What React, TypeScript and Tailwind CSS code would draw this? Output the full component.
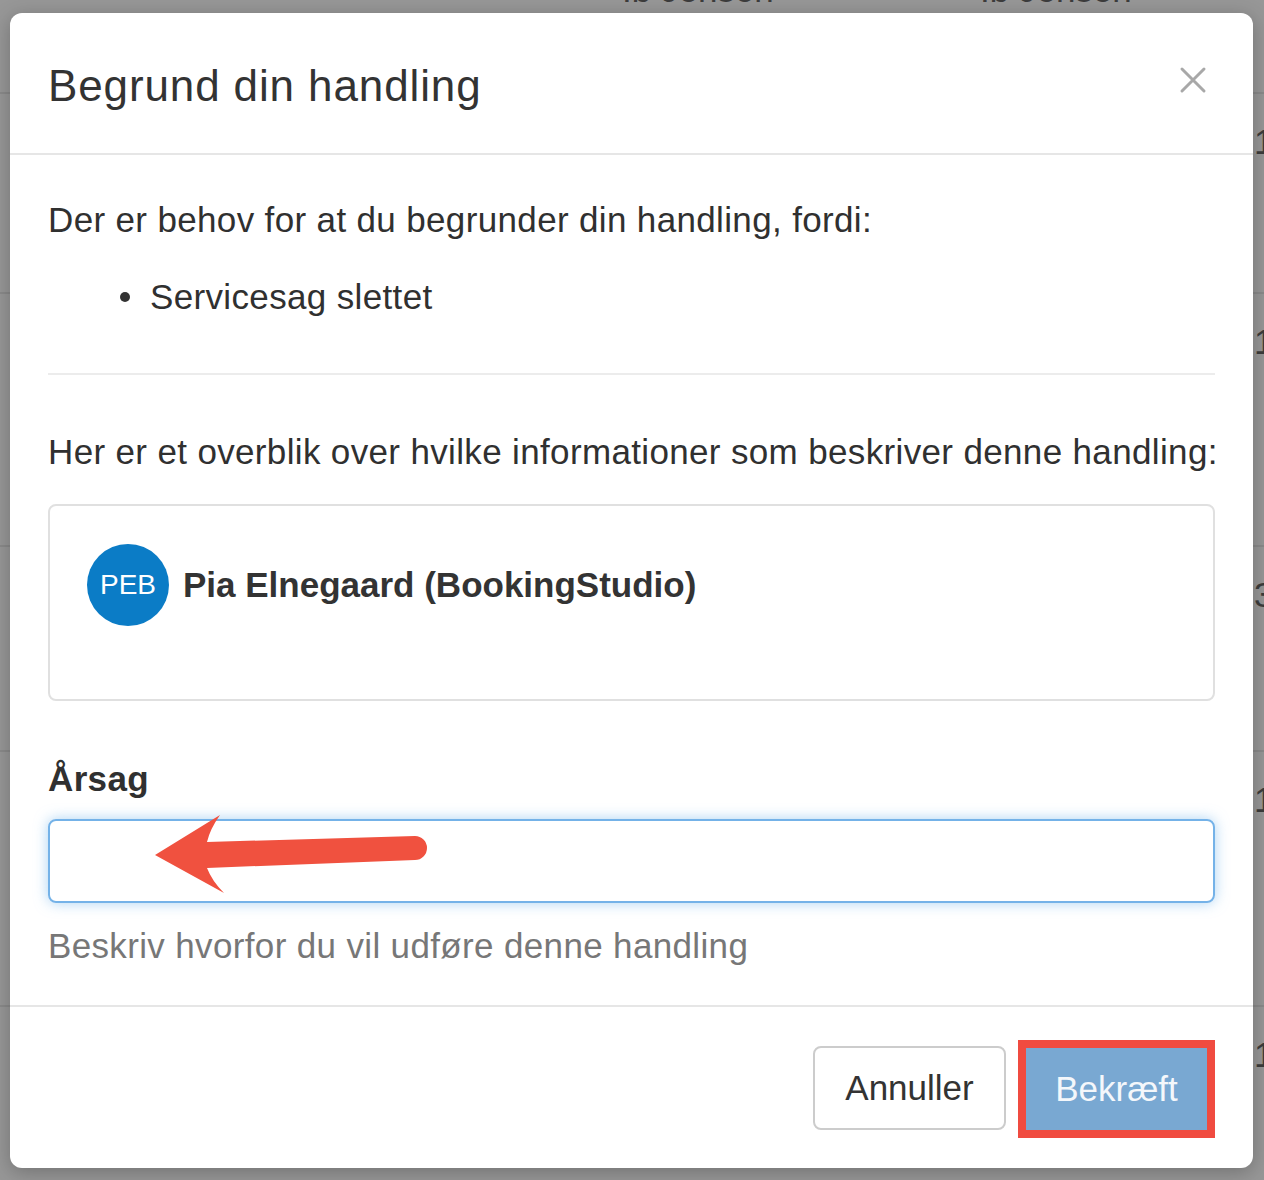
import React from "react";

const rows = [
  { top: 92, digit: "1" },
  { top: 292, digit: "1" },
  { top: 545, digit: "3" },
  { top: 750, digit: "1" },
  { top: 1005, digit: "1" },
];

function Backdrop() {
  return (
    <div className="absolute inset-0 bg-[#979797] text-[35px] text-[#3c3c3c]">
      <div className="absolute left-[622px] top-[-30px] leading-[40px]">Ib Jensen</div>
      <div className="absolute left-[980px] top-[-30px] leading-[40px]">Ib Jensen</div>
      {rows.map((r) => (
        <div key={r.top} className="absolute left-0 right-0 border-t-2 border-[#8a8a8a]" style={{ top: r.top }}>
          <span className="absolute left-[1254px] top-[28px] leading-[40px]">{r.digit}</span>
        </div>
      ))}
    </div>
  );
}

function Arrow() {
  // red annotation arrow drawn over the input
  return (
    <svg
      className="absolute left-0 top-0 overflow-visible"
      width={400}
      height={80}
      viewBox="0 0 400 80"
    >
      <path
        d="M105 34 L170 -6 Q160 8 157 21 L365 15 A12 12 0 0 1 365 39 L157 47 Q162 60 174 72 Z"
        fill="#f0513f"
      />
    </svg>
  );
}

export default function App() {
  return (
    <div className="relative h-[1180px] w-[1264px] overflow-hidden font-['Liberation_Sans',Arial,sans-serif]">
      <Backdrop />
      <div className="absolute left-[10px] top-[13px] flex h-[1155px] w-[1243px] flex-col rounded-[12px] bg-white shadow-[0_4px_20px_rgba(0,0,0,0.25)]">
        {/* header */}
        <div className="flex h-[142px] items-center justify-between border-b-2 border-[#e6e6e6] pl-[38px] pr-[46px]">
          <h1 className="mt-[5px] text-[44px] tracking-[0.02em] text-[#333]">Begrund din handling</h1>
          <svg width="28" height="28" viewBox="0 0 28 28" className="mt-[-6px]">
            <path d="M3 3 L25 25 M25 3 L3 25" stroke="#a8a8a8" strokeWidth="3" strokeLinecap="round" />
          </svg>
        </div>

        {/* body */}
        <div className="flex flex-col px-[38px] pb-[34px] pt-[40px] text-[35px] leading-[50px] tracking-[0.01em] text-[#303030]">
          <p>Der er behov for at du begrunder din handling, fordi:</p>
          <div className="mt-[27px] flex items-center gap-[20px] pl-[72px]">
            <span className="h-[10px] w-[10px] rounded-full bg-[#333]" />
            <span>Servicesag slettet</span>
          </div>
          <div className="mt-[51px] h-[2px] bg-[#ececec]" />
          <p className="mt-[52px] whitespace-nowrap">
            Her er et overblik over hvilke informationer som beskriver denne handling:
          </p>
          <div className="mt-[27px] h-[197px] rounded-[8px] border-2 border-[#e0e0e0] pl-[37px] pt-[38px]">
            <div className="flex items-center gap-[14px]">
              <div className="flex h-[82px] w-[82px] items-center justify-center rounded-full bg-[#0b7cc6] text-[28px] tracking-normal text-white">
                PEB
              </div>
              <span className="font-bold tracking-normal text-[#333]">Pia Elnegaard (BookingStudio)</span>
            </div>
          </div>
          <label className="mt-[53px] font-bold">Årsag</label>
          <div className="relative mt-[15px] h-[84px] rounded-[8px] border-2 border-[#74b2e8] shadow-[0_0_14px_rgba(102,175,233,0.55)]">
            <Arrow />
          </div>
          <p className="mt-[18px] text-[#777]">Beskriv hvorfor du vil udføre denne handling</p>
        </div>

        {/* footer */}
        <div className="flex flex-1 items-start justify-end gap-[12px] border-t-2 border-[#e6e6e6] pr-[38px] pt-[33px] text-[35px]">
          <button className="mt-[6px] h-[84px] w-[193px] rounded-[8px] border-2 border-[#cccccc] bg-white text-[#333]">
            Annuller
          </button>
          <div className="border-[8px] border-[#f04b40]">
            <button className="h-[82px] w-[181px] bg-[#79a8d2] text-[#f4f7fb]">Bekræft</button>
          </div>
        </div>
      </div>
    </div>
  );
}
